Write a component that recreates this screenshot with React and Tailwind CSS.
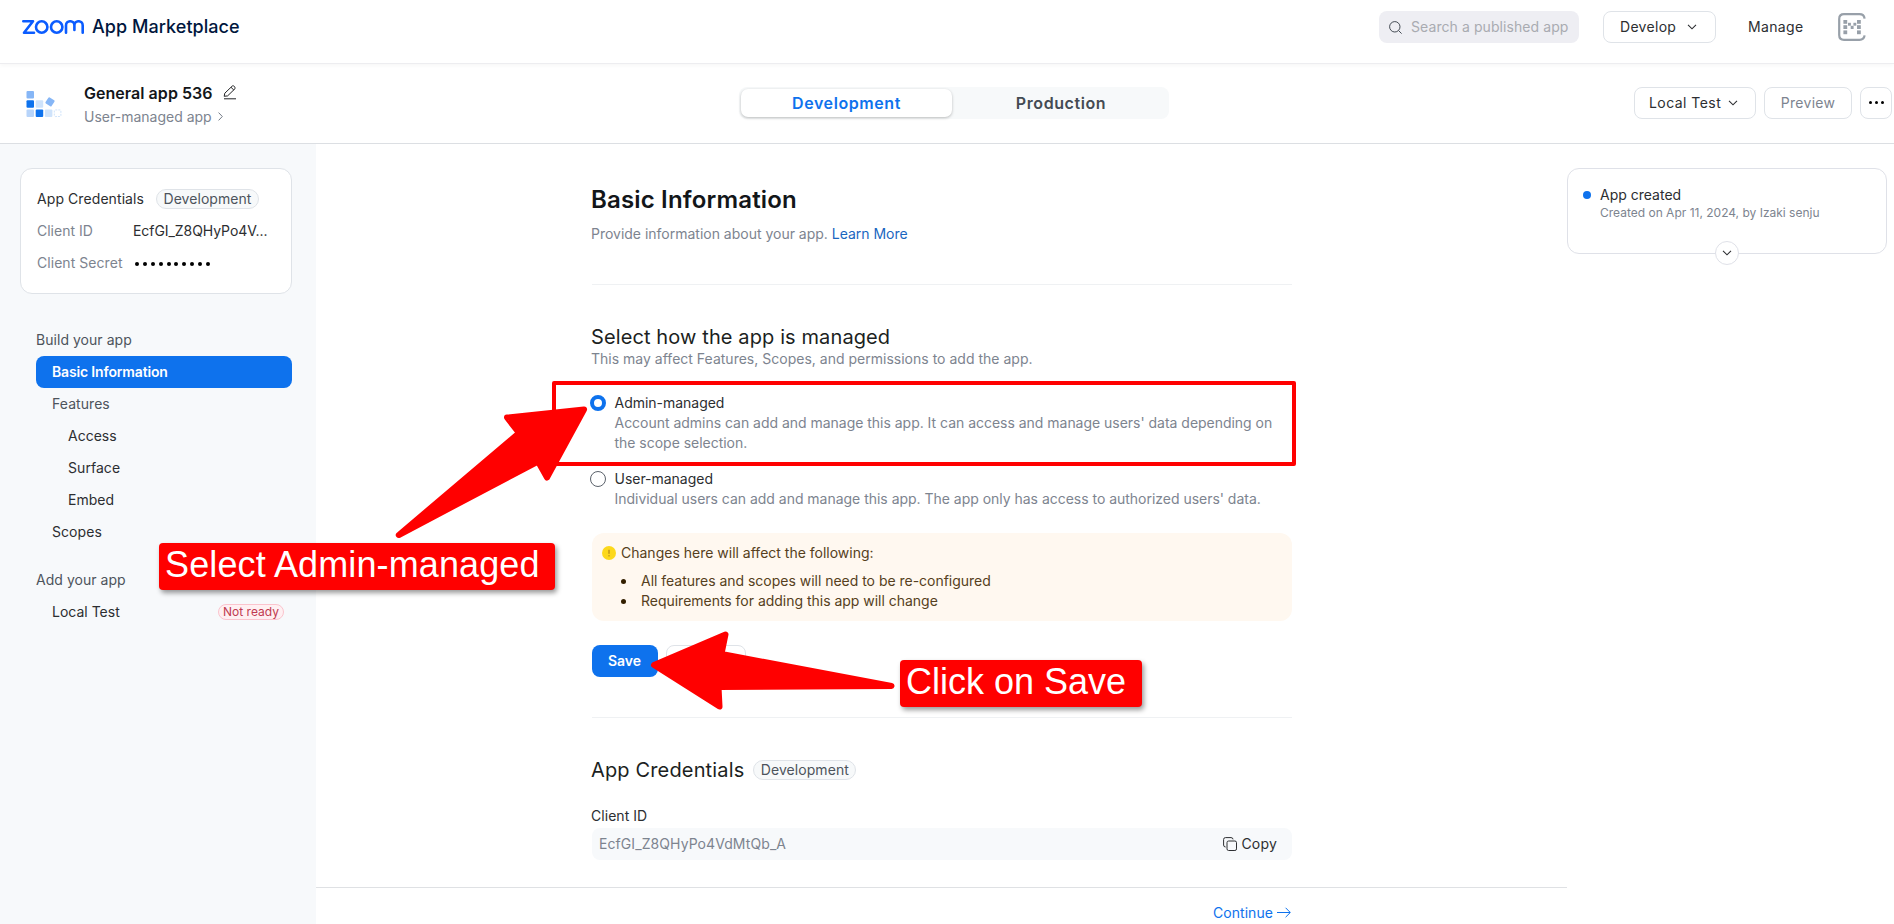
import React from "react";

const ChevronDown = ({ className = "" }) => (
  <svg className={className} width="10" height="6" viewBox="0 0 10 6" fill="none" stroke="currentColor" strokeWidth="1.1">
    <path d="M1 0.8 L5 4.8 L9 0.8" />
  </svg>
);

const ZoomLogo = () => (
  <svg width="62" height="14" viewBox="0 0 62 14" fill="none" stroke="#0b5cff" strokeWidth="2.6" strokeLinecap="round" strokeLinejoin="round">
    <path d="M1.3 1.3 H11 L2 12.7 H12" />
    <circle cx="19.7" cy="7" r="5.7" />
    <circle cx="34.7" cy="7" r="5.7" />
    <path d="M44 12.7 V5.4 C44 -0.1 52.4 -0.1 52.4 5.4 V10 M52.4 5.4 C52.4 -0.1 60.7 -0.1 60.7 5.4 V12.7" />
  </svg>
);

const AppIcon = () => (
  <svg width="38" height="30" viewBox="0 0 38 30">
    <rect x="1.5" y="2" width="7.5" height="7.5" rx="1" fill="#86b6f6" />
    <rect x="1.5" y="11.2" width="7.5" height="7.5" rx="1" fill="#0e72ed" />
    <rect x="10.7" y="11.2" width="7.5" height="7.5" rx="1" fill="#cfe3fb" />
    <rect x="1.5" y="20.5" width="7.5" height="7.5" rx="1" fill="#b7d4fa" />
    <rect x="10.7" y="20.5" width="7.5" height="7.5" rx="1" fill="#0e72ed" />
    <rect x="19.9" y="20.5" width="7.5" height="7.5" rx="1" fill="#cfe3fb" />
    <rect x="29.3" y="20.9" width="6.6" height="6.6" rx="1" fill="none" stroke="#cfe3fb" strokeDasharray="2 1" />
    <rect x="21.4" y="9.3" width="7.2" height="7.2" rx="1" fill="#86b6f6" transform="rotate(33 25 12.9)" />
  </svg>
);

const Avatar = () => (
  <svg width="28" height="28" viewBox="0 0 28 28" fill="#98a0a9">
    <path d="M26.6 5.6 Q26 1.2 21.5 1.2 H6 Q1.2 1.2 1.2 6 V22 Q1.2 26.8 6 26.8 H21.5 Q26 26.8 26.6 22.4" fill="none" stroke="#98a0a9" strokeWidth="2.2" />
    <rect x="5.4" y="7" width="3.8" height="3.8" />
    <rect x="5.4" y="12.2" width="3.8" height="3.8" />
    <rect x="5.4" y="17.4" width="3.8" height="3.8" />
    <rect x="19" y="7" width="3.8" height="3.8" />
    <rect x="19" y="12.2" width="3.8" height="3.8" />
    <rect x="19" y="17.4" width="3.8" height="3.8" />
    <rect x="10" y="9.8" width="2.9" height="2.9" />
    <rect x="12.7" y="12.8" width="2.9" height="3.2" />
    <rect x="15.4" y="9.8" width="2.9" height="2.9" />
  </svg>
);

const Badge = () => (
  <span className="flex h-5 w-[103px] items-center justify-center rounded-full border border-[#dfe3e8] bg-[#f7f9fa] text-sm tracking-[0.06px] text-[#4d545c]">
    Development
  </span>
);

const NavItem = ({ children, className = "" }) => (
  <div className={"flex h-8 items-center " + className}>{children}</div>
);

export default function App() {
  return (
    <div className="relative flex h-[924px] w-[1894px] flex-col overflow-hidden bg-white font-['Inter',sans-serif] text-sm text-[#2c2e31]">
      <header className="flex h-16 shrink-0 items-start border-b border-[#ededf0] shadow-[0_2px_4px_rgba(0,0,0,0.03)]">
        <div className="flex h-[54px] items-center pl-[22px]">
          <ZoomLogo />
          <span className="ml-2 text-[18px] font-medium tracking-[0.05px] text-[#00163d]">App Marketplace</span>
        </div>
        <div className="ml-auto flex h-[54px] items-center pr-7">
          <div className="flex h-8 w-[200px] items-center rounded-lg bg-[#eeeef3] pl-[10px]">
            <svg width="13" height="13" viewBox="0 0 13 13" fill="none" stroke="#444b53">
              <circle cx="5.8" cy="5.8" r="5.2" />
              <path d="M9.6 9.6 L12.6 12.6" />
            </svg>
            <span className="ml-[9px] whitespace-nowrap tracking-[0.08px] text-[#a9abb1]">Search a published app</span>
          </div>
          <div className="ml-6 flex h-8 w-[113px] items-center rounded-lg border border-[#dfe3e8] pl-4">
            <span className="tracking-[0.3px]">Develop</span>
            <ChevronDown className="ml-[11px]" />
          </div>
          <span className="ml-8 w-[90px] tracking-[0.35px]">Manage</span>
          <Avatar />
        </div>
      </header>

      <div className="flex h-20 shrink-0 items-center border-b border-[#dcdfe3]">
        <div className="flex w-[739px] items-center pl-[25px]">
          <AppIcon />
          <div className="mt-[2px] ml-[21px] flex flex-col">
            <div className="flex h-6 items-center text-base font-semibold tracking-[0.04px] text-[#131619]">
              General app 536
              <svg className="ml-[10px]" width="14" height="15" viewBox="0 0 14 15" fill="none" stroke="#222325">
                <path d="M1 13.8 H13" />
                <path d="M1.2 11.3 L1.8 8.2 L9.3 1 Q10 0.4 10.7 1 L12 2.3 Q12.6 3 12 3.7 L4.6 10.9 Z M8 2.3 L10.8 5" />
              </svg>
            </div>
            <div className="flex h-6 items-center text-sm text-[#7d848f]">
              User-managed app
              <svg className="ml-[6px]" width="5" height="9" viewBox="0 0 5 9" fill="none" stroke="#747b87">
                <path d="M0.6 0.6 L4.3 4.5 L0.6 8.4" />
              </svg>
            </div>
          </div>
        </div>
        <div className="-mt-[2px] flex h-8 w-[430px] items-center rounded-lg bg-[#f7f9fa] pl-0.5 text-base font-semibold">
          <div className="flex h-7 w-[211px] items-center justify-center rounded-[7px] bg-white tracking-[0.58px] text-[#0e72ed] shadow-[0_1px_3px_rgba(0,0,0,0.25)]">Development</div>
          <div className="flex flex-1 items-center justify-center pl-px tracking-[0.58px] text-[#444b53]">Production</div>
        </div>
        <div className="-mt-[2px] ml-auto flex gap-2 pr-0.5">
          <div className="flex h-8 w-[122px] items-center rounded-lg border border-[#dfe3e8] pl-[14px]">
            <span className="tracking-[0.45px]">Local Test</span>
            <ChevronDown className="ml-[7px]" />
          </div>
          <div className="flex h-8 w-[88px] items-center justify-center rounded-lg border border-[#dfe3e8] tracking-[0.3px] text-[#7d848f]">Preview</div>
          <div className="flex h-8 w-8 items-center justify-center gap-[3px] rounded-lg border border-[#dfe3e8]">
            <i className="h-[3px] w-[3px] rounded-full bg-black" />
            <i className="h-[3px] w-[3px] rounded-full bg-black" />
            <i className="h-[3px] w-[3px] rounded-full bg-black" />
          </div>
        </div>
      </div>

      <div className="flex min-h-0 flex-1">
        <aside className="w-[316px] shrink-0 bg-[#f7f9fb] pt-6 pr-6 pl-5">
          <div className="h-[126px] rounded-xl border border-[#dfe3e8] bg-white px-4 pt-[14px]">
            <div className="flex h-8 items-center">
              <span className="w-[119px] tracking-[0.08px]">App Credentials</span>
              <Badge />
            </div>
            <div className="flex h-8 items-center">
              <span className="w-24 text-[#7d848f]">Client ID</span>
              <span className="tracking-[-0.06px]">EcfGI_Z8QHyPo4V...</span>
            </div>
            <div className="flex h-8 items-center">
              <span className="w-24 tracking-[0.05px] text-[#7d848f]">Client Secret</span>
              <span className="flex gap-[3.9px] pt-px pl-[2px]">
                {Array.from({ length: 10 }, (_, i) => (
                  <i key={i} className="h-1 w-1 rounded-full bg-black" />
                ))}
              </span>
            </div>
          </div>
          <nav className="mt-[30px] pl-4">
            <NavItem className="tracking-[0.04px] text-[#4d545c]">Build your app</NavItem>
            <NavItem className="rounded-lg bg-[#0e72ed] pl-4 font-semibold text-white"><span className="tracking-[-0.16px]">Basic Information</span></NavItem>
            <NavItem className="pl-4 tracking-[0.06px] text-[#4d545c]">Features</NavItem>
            <NavItem className="pl-8">Access</NavItem>
            <NavItem className="pl-8 tracking-[0.06px]">Surface</NavItem>
            <NavItem className="pl-8">Embed</NavItem>
            <NavItem className="pl-4 tracking-[0.06px]">Scopes</NavItem>
            <NavItem className="mt-4 tracking-[0.04px] text-[#4d545c]">Add your app</NavItem>
            <NavItem className="justify-between pr-2 pl-4">
              Local Test
              <span className="flex h-4 w-[66px] items-center justify-center rounded-full border border-[#fbc4cd] bg-[#fff0f2] text-xs text-[#c03a50]">Not ready</span>
            </NavItem>
          </nav>
        </aside>

        <main className="flex w-[1251px] flex-col">
          <div className="ml-[276px] h-[743px] w-[700px]">
            <h1 className="-ml-px pt-10 text-2xl leading-8 font-semibold tracking-[0.17px] text-[#131619]">Basic Information</h1>
            <p className="-ml-px mt-[8px] leading-5 tracking-[-0.01px] text-[#7d848f]">
              Provide information about your app. <span className="text-[#1a66bf]">Learn More</span>
            </p>
            <div className="mt-10 border-t border-[#eff1f3]" />
            <h2 className="-ml-px mt-10 text-xl leading-6 tracking-[0.11px] text-[#1c1f22]">Select how the app is managed</h2>
            <p className="-ml-px leading-5 tracking-[0.01px] text-[#7d848f]">This may affect Features, Scopes, and permissions to add the app.</p>
            <div className="mt-6 flex leading-5">
              <i className="-ml-0.5 mt-[2px] h-4 w-4 shrink-0 rounded-full border-4 border-[#0e72ed]" />
              <div className="ml-[8.5px]">
                <div className="tracking-[-0.02px]">Admin-managed</div>
                <div className="tracking-[-0.022px] text-[#7d848f]">Account admins can add and manage this app. It can access and manage users' data depending on the scope selection.</div>
              </div>
            </div>
            <div className="mt-4 flex leading-5">
              <i className="-ml-0.5 mt-[2px] h-4 w-4 shrink-0 rounded-full border border-[#5b626b]" />
              <div className="ml-[8.5px]">
                <div className="tracking-[-0.02px]">User-managed</div>
                <div className="tracking-[-0.022px] text-[#7d848f]">Individual users can add and manage this app. The app only has access to authorized users' data.</div>
              </div>
            </div>
            <div className="mt-6 h-[88px] rounded-xl bg-[#fff8f0] pt-[10px] pl-[10px] leading-5 text-[#563f20]">
              <div className="flex items-center">
                <svg width="14" height="14" viewBox="0 0 14 14">
                  <circle cx="7" cy="7" r="7" fill="#fcd81c" />
                  <path d="M7 3.8 V7.8 M7 9.2 V10.4" stroke="#a0741a" strokeWidth="1" />
                </svg>
                <span className="ml-[5px]">Changes here will affect the following:</span>
              </div>
              <ul className="mt-2">
                {["All features and scopes will need to be re-configured", "Requirements for adding this app will change"].map((t) => (
                  <li key={t} className="flex items-center">
                    <i className="mt-px ml-[19px] h-[5px] w-[5px] rounded-full bg-[#331f00]" />
                    <span className="ml-[15px] tracking-[-0.02px]">{t}</span>
                  </li>
                ))}
              </ul>
            </div>
            <div className="mt-6 flex gap-2">
              <div className="flex h-8 w-[66px] items-center justify-center rounded-lg bg-[#0e72ed] pr-px font-semibold text-white">Save</div>
              <div className="h-8 w-20 rounded-lg border border-[#dfe3e8]" />
            </div>
            <div className="mt-10 border-t border-[#eff1f3]" />
            <div className="-ml-px mt-10 flex h-6 items-center gap-[9px] text-xl tracking-[0.15px] text-[#1c1f22]">
              App Credentials <Badge />
            </div>
            <div className="-ml-px mt-6 leading-5 tracking-[0.04px]">Client ID</div>
            <div className="mt-[2px] flex h-8 items-center rounded-lg bg-[#f7f9fb] pr-[15px] pl-[7px] text-[#7d848f]">
              <span className="tracking-[0.08px]">EcfGI_Z8QHyPo4VdMtQb_A</span>
              <span className="ml-auto flex items-center gap-1 tracking-[0.2px] text-[#2c2e31]">
                <svg width="14" height="14" viewBox="0 0 14 14" fill="none" stroke="currentColor">
                  <rect x="4" y="4" width="9.5" height="9.5" rx="1.6" />
                  <path d="M2.6 10 Q0.6 10 0.6 8 V2.5 Q0.6 0.6 2.5 0.6 H8 Q10 0.6 10 2.4" />
                </svg>
                Copy
              </span>
            </div>
          </div>
          <div className="flex flex-1 border-t border-[#dfe1e4] pl-[897px]">
            <div className="mt-[15px] flex h-5 items-center tracking-[0.05px] text-[#0e72ed]">
              Continue
              <svg className="-mt-px ml-1" width="14" height="11" viewBox="0 0 14 11" fill="none" stroke="currentColor">
                <path d="M0 5.5 H13 M8.6 0.8 L13.3 5.5 L8.6 10.2" />
              </svg>
            </div>
          </div>
        </main>

        <div className="relative mt-6 h-[86px] w-80 rounded-xl border border-[#dfe1e8] pt-[16px] pl-[15px]">
          <div className="flex h-5 items-center">
            <i className="h-2 w-2 rounded-full bg-[#0e72ed]" />
            <span className="ml-[9px]">App created</span>
          </div>
          <div className="pl-[17px] text-xs leading-4 text-[#7d848f]">Created on Apr 11, 2024, by Izaki senju</div>
          <div className="absolute -bottom-3 left-[147px] flex h-6 w-6 items-center justify-center rounded-full border border-[#dfe1e8] bg-white">
            <ChevronDown />
          </div>
        </div>
      </div>

      <div className="absolute top-[381px] left-[552px] h-[85px] w-[744px] rounded-[2px] border-4 border-[#ff0000]" />
      <svg className="absolute top-0 left-0" width="1894" height="924" viewBox="0 0 1894 924" fill="#ff0000" stroke="#ff0000" strokeWidth="6" strokeLinejoin="round">
        <path d="M584 409.5 L507 417.5 L519 433 L398.8 535 L538 461.5 L547 477.5 Z" />
        <path d="M654 665 L725.5 634.5 L721.5 654 L891.5 686 L718.5 687 L719.5 706.5 Z" />
      </svg>
      <div className="absolute top-[543px] left-[159px] h-[47px] w-[396px] rounded-[4px] bg-[#ff0000] pl-[6px] font-['Liberation_Sans',Arial,sans-serif] text-[36px] leading-[44px] tracking-[0.12px] whitespace-nowrap text-white shadow-[2px_3px_5px_rgba(0,0,0,0.4)]">Select Admin-managed</div>
      <div className="absolute top-[660px] left-[900px] h-[47px] w-[242px] rounded-[4px] bg-[#ff0000] pl-[6px] font-['Liberation_Sans',Arial,sans-serif] text-[36px] leading-[44px] whitespace-nowrap text-white shadow-[2px_3px_5px_rgba(0,0,0,0.4)]">Click on Save</div>
    </div>
  );
}
